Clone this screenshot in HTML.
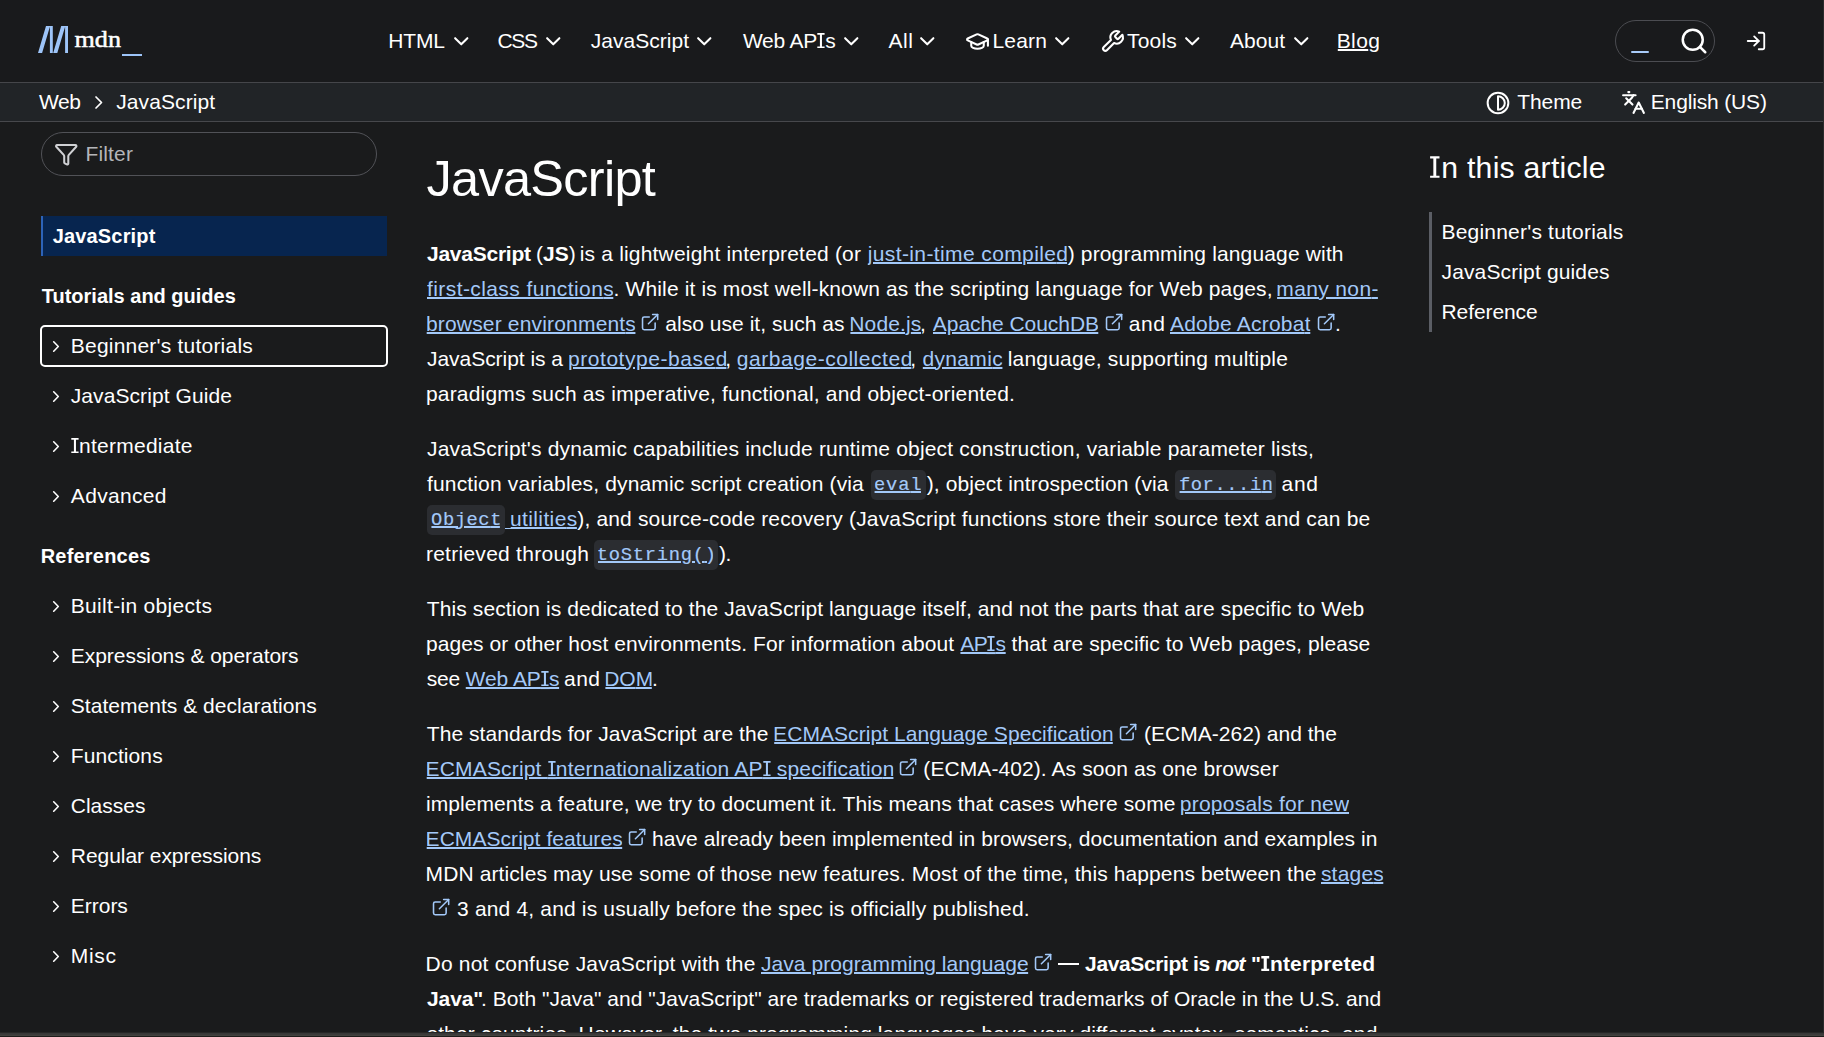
<!DOCTYPE html>
<html lang="en">
<head>
<meta charset="utf-8">
<title>JavaScript | MDN</title>
<style>
*{box-sizing:border-box;margin:0;padding:0}
html,body{width:1824px;height:1037px;overflow:hidden;background:#1a1b1c;color:#fff;
  font-family:"Liberation Sans",sans-serif;}
body{position:relative}
a{color:inherit}
.abs{position:absolute;white-space:nowrap}
svg{display:block;overflow:visible}
.ic{position:absolute;fill:none;stroke:#fff;stroke-width:2;stroke-linecap:round;stroke-linejoin:round}
.box{position:absolute}
#hdr{left:0;top:0;width:1824px;height:82px;background:#191a1c}
#hdrline{left:0;top:82px;width:1824px;height:1px;background:#45464a}
#crumb{left:0;top:83px;width:1824px;height:38px;background:#212427}
#crumbline{left:0;top:121px;width:1824px;height:1px;background:#47484c}
</style>
</head>
<body>
<div class="box" id="hdr"></div><div class="box" id="hdrline"></div><div class="box" id="crumb"></div><div class="box" id="crumbline"></div>
<!-- logo -->
<svg class="box" style="left:38px;top:25.8px;width:30px;height:27px" viewBox="0 0 30 27"><path fill="#9dc4f8" d="M0 27 8 0h4.1L4.1 27ZM11.9 0h2.9v27h-2.9ZM15.2 27l8-27h4.1l-8 27ZM27.1 0H30v27h-2.9Z"/></svg>
<svg class="box" style="left:74px;top:24px;width:50px;height:30px" viewBox="0 0 50 30"><text x="0.5" y="22.5" font-family="Liberation Serif, serif" font-size="22.5" fill="#fff" stroke="#fff" stroke-width="0.45" textLength="46.5" lengthAdjust="spacingAndGlyphs">mdn</text></svg>
<div class="box" style="left:122px;top:53.5px;width:20px;height:2.5px;background:#9dc4f8"></div>

<!-- nav chevrons -->
<svg class="ic" style="left:448.5px;top:29px;width:24.5px;height:24.5px" viewBox="0 0 24 24"><path d="m6 9 6 6 6-6"/></svg>
<svg class="ic" style="left:540.5px;top:29px;width:24.5px;height:24.5px" viewBox="0 0 24 24"><path d="m6 9 6 6 6-6"/></svg>
<svg class="ic" style="left:692px;top:29px;width:24.5px;height:24.5px" viewBox="0 0 24 24"><path d="m6 9 6 6 6-6"/></svg>
<svg class="ic" style="left:838.5px;top:29px;width:24.5px;height:24.5px" viewBox="0 0 24 24"><path d="m6 9 6 6 6-6"/></svg>
<svg class="ic" style="left:914.5px;top:29px;width:24.5px;height:24.5px" viewBox="0 0 24 24"><path d="m6 9 6 6 6-6"/></svg>
<svg class="ic" style="left:1049.5px;top:29px;width:24.5px;height:24.5px" viewBox="0 0 24 24"><path d="m6 9 6 6 6-6"/></svg>
<svg class="ic" style="left:1180px;top:29px;width:24.5px;height:24.5px" viewBox="0 0 24 24"><path d="m6 9 6 6 6-6"/></svg>
<svg class="ic" style="left:1289px;top:29px;width:24.5px;height:24.5px" viewBox="0 0 24 24"><path d="m6 9 6 6 6-6"/></svg>
<!-- learn / tools -->
<svg class="ic" style="left:965px;top:28.6px;width:25px;height:25px" viewBox="0 0 24 24"><path d="M21.42 10.922a1 1 0 0 0-.019-1.838L12.83 5.18a2 2 0 0 0-1.66 0L2.6 9.08a1 1 0 0 0 0 1.832l8.57 3.908a2 2 0 0 0 1.66 0z"/><path d="M22 10v6"/><path d="M6 12.5V16a6 3 0 0 0 12 0v-3.5"/></svg>
<svg class="ic" style="left:1099.5px;top:28.6px;width:25px;height:25px" viewBox="0 0 24 24"><path d="M14.7 6.3a1 1 0 0 0 0 1.4l1.6 1.6a1 1 0 0 0 1.4 0l3.77-3.77a6 6 0 0 1-7.94 7.94l-6.91 6.91a2.12 2.12 0 0 1-3-3l6.91-6.91a6 6 0 0 1 7.94-7.94l-3.76 3.76z"/></svg>
<!-- search -->
<div class="box" style="left:1615px;top:20px;width:100px;height:42px;border:1px solid #4b4c51;border-radius:21px"></div>
<div class="box" style="left:1631px;top:51px;width:18px;height:2px;background:#a9ccf9;border-radius:1px"></div>
<svg class="ic" style="left:1679px;top:26.25px;width:30px;height:30px" viewBox="0 0 24 24"><circle cx="11" cy="11" r="8"/><path d="m21 21-4.3-4.3"/></svg>
<svg class="ic" style="left:1745px;top:30.3px;width:22px;height:22px" viewBox="0 0 24 24"><path d="M15 3h4a2 2 0 0 1 2 2v14a2 2 0 0 1-2 2h-4"/><polyline points="10 17 15 12 10 7"/><line x1="15" x2="3" y1="12" y2="12"/></svg>
<!-- breadcrumb chevron -->
<svg class="ic" style="left:95px;top:96px;width:8px;height:13px;stroke-width:1.7" viewBox="0 0 8 13"><path d="M1 1 6.5 6.5 1 12"/></svg>
<!-- theme icon -->
<svg class="ic" style="left:1486.3px;top:90.5px;width:24px;height:24px" viewBox="0 0 24 24"><circle cx="12" cy="12" r="10.35"/><path d="M12 5.2v13.6M12 5.2a6.8 6.8 0 0 1 0 13.6"/></svg>
<!-- languages icon -->
<svg class="ic" style="left:1620.5px;top:89.5px;width:25px;height:25px" viewBox="0 0 24 24"><path d="m5 8 6 6"/><path d="m4 14 6-6 2-3"/><path d="M2 5h12"/><path d="M7 2h1"/><path d="m22 22-5-10-5 10"/><path d="M14 18h6"/></svg>

<!-- sidebar filter -->
<div class="box" style="left:41px;top:132px;width:336px;height:44px;border:1px solid #515257;border-radius:22px"></div>
<svg class="ic" style="left:53.7px;top:142.3px;width:24.5px;height:24.5px;stroke:#d0d1d4" viewBox="0 0 24 24"><path d="M10 20a1 1 0 0 0 .553.895l2 1A1 1 0 0 0 14 21v-7a2 2 0 0 1 .517-1.341L21.74 4.67A1 1 0 0 0 21 3H3a1 1 0 0 0-.742 1.67l7.225 7.989A2 2 0 0 1 10 14z"/></svg>
<!-- sidebar active -->
<div class="box" style="left:41px;top:216px;width:346px;height:40px;background:#07254f;border-left:2px solid #2d63b8"></div>
<!-- focus ring -->
<div class="box" style="left:40px;top:325px;width:348px;height:42px;border:2px solid #fff;border-radius:5px"></div>
<svg class="ic" style="left:52px;top:339.7px;width:8px;height:13px;stroke-width:1.6" viewBox="0 0 8 13"><path d="M1.7 1.8 6.3 6.5 1.7 11.2"/></svg>
<svg class="ic" style="left:52px;top:389.7px;width:8px;height:13px;stroke-width:1.6" viewBox="0 0 8 13"><path d="M1.7 1.8 6.3 6.5 1.7 11.2"/></svg>
<svg class="ic" style="left:52px;top:439.7px;width:8px;height:13px;stroke-width:1.6" viewBox="0 0 8 13"><path d="M1.7 1.8 6.3 6.5 1.7 11.2"/></svg>
<svg class="ic" style="left:52px;top:489.7px;width:8px;height:13px;stroke-width:1.6" viewBox="0 0 8 13"><path d="M1.7 1.8 6.3 6.5 1.7 11.2"/></svg>
<svg class="ic" style="left:52px;top:599.7px;width:8px;height:13px;stroke-width:1.6" viewBox="0 0 8 13"><path d="M1.7 1.8 6.3 6.5 1.7 11.2"/></svg>
<svg class="ic" style="left:52px;top:649.7px;width:8px;height:13px;stroke-width:1.6" viewBox="0 0 8 13"><path d="M1.7 1.8 6.3 6.5 1.7 11.2"/></svg>
<svg class="ic" style="left:52px;top:699.7px;width:8px;height:13px;stroke-width:1.6" viewBox="0 0 8 13"><path d="M1.7 1.8 6.3 6.5 1.7 11.2"/></svg>
<svg class="ic" style="left:52px;top:749.7px;width:8px;height:13px;stroke-width:1.6" viewBox="0 0 8 13"><path d="M1.7 1.8 6.3 6.5 1.7 11.2"/></svg>
<svg class="ic" style="left:52px;top:799.7px;width:8px;height:13px;stroke-width:1.6" viewBox="0 0 8 13"><path d="M1.7 1.8 6.3 6.5 1.7 11.2"/></svg>
<svg class="ic" style="left:52px;top:849.7px;width:8px;height:13px;stroke-width:1.6" viewBox="0 0 8 13"><path d="M1.7 1.8 6.3 6.5 1.7 11.2"/></svg>
<svg class="ic" style="left:52px;top:899.7px;width:8px;height:13px;stroke-width:1.6" viewBox="0 0 8 13"><path d="M1.7 1.8 6.3 6.5 1.7 11.2"/></svg>
<svg class="ic" style="left:52px;top:949.7px;width:8px;height:13px;stroke-width:1.6" viewBox="0 0 8 13"><path d="M1.7 1.8 6.3 6.5 1.7 11.2"/></svg>
<!-- toc rule -->
<div class="box" style="left:1429px;top:212px;width:3px;height:120px;background:#5b5e65"></div>

<svg class="box" style="left:1429px;top:155px;width:12px;height:24px" viewBox="0 0 12 24"><path fill="#fff" d="M1.1 1.3h9.4v2.1H7.25v17.3h3.25v2.1H1.1v-2.1h3.25V3.4H1.1z"/></svg>
<svg class="ic" style="left:639.8px;top:311.7px;width:20.2px;height:20.2px;stroke:#a3c9f9;stroke-width:1.85" viewBox="0 0 24 24"><path d="M18 13v6a2 2 0 0 1-2 2H5a2 2 0 0 1-2-2V8a2 2 0 0 1 2-2h6"/><path d="M15 3h6v6"/><path d="M10 14 21 3"/></svg>
<svg class="ic" style="left:1104.4px;top:311.7px;width:20.2px;height:20.2px;stroke:#a3c9f9;stroke-width:1.85" viewBox="0 0 24 24"><path d="M18 13v6a2 2 0 0 1-2 2H5a2 2 0 0 1-2-2V8a2 2 0 0 1 2-2h6"/><path d="M15 3h6v6"/><path d="M10 14 21 3"/></svg>
<svg class="ic" style="left:1315.5px;top:311.7px;width:20.2px;height:20.2px;stroke:#a3c9f9;stroke-width:1.85" viewBox="0 0 24 24"><path d="M18 13v6a2 2 0 0 1-2 2H5a2 2 0 0 1-2-2V8a2 2 0 0 1 2-2h6"/><path d="M15 3h6v6"/><path d="M10 14 21 3"/></svg>
<div class="box" style="left:870.5px;top:470px;width:55.5px;height:30px;background:#2b2d31;border-radius:5px"></div>
<div class="box" style="left:1175.0px;top:470px;width:100.5px;height:30px;background:#2b2d31;border-radius:5px"></div>
<div class="box" style="left:427.4px;top:505px;width:77.3px;height:30px;background:#2b2d31;border-radius:5px"></div>
<div class="box" style="left:594.2px;top:540px;width:123.4px;height:30px;background:#2b2d31;border-radius:5px"></div>
<svg class="ic" style="left:1118.0px;top:721.7px;width:20.2px;height:20.2px;stroke:#a3c9f9;stroke-width:1.85" viewBox="0 0 24 24"><path d="M18 13v6a2 2 0 0 1-2 2H5a2 2 0 0 1-2-2V8a2 2 0 0 1 2-2h6"/><path d="M15 3h6v6"/><path d="M10 14 21 3"/></svg>
<svg class="ic" style="left:897.9px;top:756.7px;width:20.2px;height:20.2px;stroke:#a3c9f9;stroke-width:1.85" viewBox="0 0 24 24"><path d="M18 13v6a2 2 0 0 1-2 2H5a2 2 0 0 1-2-2V8a2 2 0 0 1 2-2h6"/><path d="M15 3h6v6"/><path d="M10 14 21 3"/></svg>
<svg class="ic" style="left:626.8px;top:826.7px;width:20.2px;height:20.2px;stroke:#a3c9f9;stroke-width:1.85" viewBox="0 0 24 24"><path d="M18 13v6a2 2 0 0 1-2 2H5a2 2 0 0 1-2-2V8a2 2 0 0 1 2-2h6"/><path d="M15 3h6v6"/><path d="M10 14 21 3"/></svg>
<svg class="ic" style="left:431.3px;top:896.7px;width:20.2px;height:20.2px;stroke:#a3c9f9;stroke-width:1.85" viewBox="0 0 24 24"><path d="M18 13v6a2 2 0 0 1-2 2H5a2 2 0 0 1-2-2V8a2 2 0 0 1 2-2h6"/><path d="M15 3h6v6"/><path d="M10 14 21 3"/></svg>
<svg class="ic" style="left:1032.7px;top:951.7px;width:20.2px;height:20.2px;stroke:#a3c9f9;stroke-width:1.85" viewBox="0 0 24 24"><path d="M18 13v6a2 2 0 0 1-2 2H5a2 2 0 0 1-2-2V8a2 2 0 0 1 2-2h6"/><path d="M15 3h6v6"/><path d="M10 14 21 3"/></svg>
<div class="box" style="left:1058.3px;top:963.3px;width:20.8px;height:1.7px;background:#fff"></div>
<div class="box" style="left:505px;top:527.5px;width:7px;height:1.5px;background:#a3c9f9"></div>
<span class="abs" style="left:388.28px;top:29.12px;font-size:21px;line-height:24px;letter-spacing:-0.151px;">HTML</span>
<span class="abs" style="left:497.53px;top:29.12px;font-size:21px;line-height:24px;letter-spacing:-1.379px;">CSS</span>
<span class="abs" style="left:590.67px;top:29.12px;font-size:21px;line-height:24px;letter-spacing:0.048px;">JavaScript</span>
<span class="abs" style="left:742.91px;top:29.12px;font-size:21px;line-height:24px;letter-spacing:-0.223px;">Web AP<svg style="display:inline-block;width:8.20px;height:15.10px;vertical-align:baseline" viewBox="0 0 8.20 15.10"><path fill="currentColor" d="M0.30 0H7.60V1.65H4.97V13.45H7.60V15.10H0.30V13.45H2.92V1.65H0.30Z"/></svg>s</span>
<span class="abs" style="left:888.46px;top:29.12px;font-size:21px;line-height:24px;letter-spacing:0.551px;">All</span>
<span class="abs" style="left:992.48px;top:29.12px;font-size:21px;line-height:24px;letter-spacing:0.192px;">Learn</span>
<span class="abs" style="left:1127.03px;top:29.12px;font-size:21px;line-height:24px;letter-spacing:0.175px;">Tools</span>
<span class="abs" style="left:1229.96px;top:29.12px;font-size:21px;line-height:24px;letter-spacing:0.076px;">About</span>
<span class="abs" style="left:1336.68px;top:29.12px;font-size:21px;line-height:24px;letter-spacing:0.410px;text-decoration:underline;text-decoration-thickness:1.5px;text-underline-offset:1.2px;clip-path:inset(-8px 0.95px -8px 1.12px);">Blo<span style="letter-spacing:0">g</span></span>
<span class="abs" style="left:38.91px;top:89.72px;font-size:21px;line-height:24px;letter-spacing:-0.419px;">Web</span>
<span class="abs" style="left:116.17px;top:89.72px;font-size:21px;line-height:24px;letter-spacing:0.104px;">JavaScript</span>
<span class="abs" style="left:1517.33px;top:89.72px;font-size:21px;line-height:24px;letter-spacing:-0.114px;">Theme</span>
<span class="abs" style="left:1650.78px;top:89.72px;font-size:21px;line-height:24px;letter-spacing:-0.159px;">English (US)</span>
<span class="abs" style="left:85.48px;top:142.22px;font-size:21px;line-height:24px;letter-spacing:0.160px;color:#b4b5b8;">Filter</span>
<span class="abs" style="left:52.70px;top:224.27px;font-size:20px;line-height:24px;letter-spacing:0.164px;font-weight:bold;">JavaScript</span>
<span class="abs" style="left:41.78px;top:284.07px;font-size:20px;line-height:24px;letter-spacing:-0.003px;font-weight:bold;">Tutorials and guides</span>
<span class="abs" style="left:70.80px;top:333.72px;font-size:21px;line-height:24px;letter-spacing:0.212px;">Beginner's tutorials</span>
<span class="abs" style="left:70.80px;top:383.72px;font-size:21px;line-height:24px;letter-spacing:0.074px;">JavaScript Guide</span>
<span class="abs" style="left:70.80px;top:433.72px;font-size:21px;line-height:24px;letter-spacing:0.264px;"><svg style="display:inline-block;width:8.20px;height:15.10px;vertical-align:baseline" viewBox="0 0 8.20 15.10"><path fill="currentColor" d="M0.30 0H7.60V1.65H4.97V13.45H7.60V15.10H0.30V13.45H2.92V1.65H0.30Z"/></svg>ntermediate</span>
<span class="abs" style="left:70.80px;top:483.72px;font-size:21px;line-height:24px;letter-spacing:0.335px;">Advanced</span>
<span class="abs" style="left:40.66px;top:544.07px;font-size:20px;line-height:24px;letter-spacing:0.213px;font-weight:bold;">References</span>
<span class="abs" style="left:70.80px;top:593.72px;font-size:21px;line-height:24px;letter-spacing:0.306px;">Built-in objects</span>
<span class="abs" style="left:70.80px;top:643.72px;font-size:21px;line-height:24px;letter-spacing:-0.046px;">Expressions &amp; operators</span>
<span class="abs" style="left:70.80px;top:693.72px;font-size:21px;line-height:24px;letter-spacing:0.030px;">Statements &amp; declarations</span>
<span class="abs" style="left:70.80px;top:743.72px;font-size:21px;line-height:24px;letter-spacing:0.101px;">Functions</span>
<span class="abs" style="left:70.80px;top:793.72px;font-size:21px;line-height:24px;letter-spacing:-0.007px;">Classes</span>
<span class="abs" style="left:70.80px;top:843.72px;font-size:21px;line-height:24px;letter-spacing:-0.049px;">Regular expressions</span>
<span class="abs" style="left:70.80px;top:893.72px;font-size:21px;line-height:24px;letter-spacing:-0.023px;">Errors</span>
<span class="abs" style="left:70.80px;top:943.72px;font-size:21px;line-height:24px;letter-spacing:0.661px;">Misc</span>
<span class="abs" style="left:1441.29px;top:147.54px;font-size:30.2px;line-height:40px;letter-spacing:0.251px;">n this article</span>
<span class="abs" style="left:1441.50px;top:219.72px;font-size:21px;line-height:24px;letter-spacing:0.201px;">Beginner's tutorials</span>
<span class="abs" style="left:1441.50px;top:259.72px;font-size:21px;line-height:24px;letter-spacing:0.137px;">JavaScript guides</span>
<span class="abs" style="left:1441.50px;top:299.72px;font-size:21px;line-height:24px;letter-spacing:-0.095px;">Reference</span>
<span class="abs" style="left:426.51px;top:149.00px;font-size:50.5px;line-height:60px;letter-spacing:-0.712px;">JavaScript</span>
<span class="abs" style="left:426.98px;top:241.72px;font-size:21px;line-height:24px;letter-spacing:-0.240px;font-weight:bold;">JavaScript</span>
<span class="abs" style="left:535.90px;top:241.72px;font-size:21px;line-height:24px;letter-spacing:0.039px;">(<b>JS</b>)</span>
<span class="abs" style="left:579.70px;top:241.72px;font-size:21px;line-height:24px;letter-spacing:0.186px;">is a lightweight interpreted (or</span>
<span class="abs" style="left:867.71px;top:241.72px;font-size:21px;line-height:24px;letter-spacing:0.388px;color:#a3c9f9;text-decoration:underline;text-decoration-thickness:1.5px;text-underline-offset:1.2px;clip-path:inset(-8px 0.95px -8px 0.00px);">just-in-time compile<span style="letter-spacing:0">d</span></span>
<span class="abs" style="left:1067.68px;top:241.72px;font-size:21px;line-height:24px;letter-spacing:0.150px;">) programming language with</span>
<span class="abs" style="left:427.00px;top:276.72px;font-size:21px;line-height:24px;letter-spacing:0.410px;color:#a3c9f9;text-decoration:underline;text-decoration-thickness:1.5px;text-underline-offset:1.2px;clip-path:inset(-8px 0.36px -8px 0.00px);">first-class function<span style="letter-spacing:0">s</span></span>
<span class="abs" style="left:613.58px;top:276.72px;font-size:21px;line-height:24px;letter-spacing:0.133px;">. While it is most well-known as the scripting language for Web pages,</span>
<span class="abs" style="left:1276.31px;top:276.72px;font-size:21px;line-height:24px;letter-spacing:0.362px;color:#a3c9f9;text-decoration:underline;text-decoration-thickness:1.5px;text-underline-offset:1.2px;clip-path:inset(-8px 0.53px -8px 0.79px);">many non<span style="letter-spacing:0">-</span></span>
<span class="abs" style="left:425.95px;top:311.72px;font-size:21px;line-height:24px;letter-spacing:0.175px;color:#a3c9f9;text-decoration:underline;text-decoration-thickness:1.5px;text-underline-offset:1.2px;clip-path:inset(-8px 0.36px -8px 0.75px);">browser environment<span style="letter-spacing:0">s</span></span>
<span class="abs" style="left:665.31px;top:311.72px;font-size:21px;line-height:24px;letter-spacing:0.035px;">also use it, such as</span>
<span class="abs" style="left:849.28px;top:311.72px;font-size:21px;line-height:24px;letter-spacing:0.146px;color:#a3c9f9;text-decoration:underline;text-decoration-thickness:1.5px;text-underline-offset:1.2px;clip-path:inset(-8px 0.36px -8px 1.12px);">Node.j<span style="letter-spacing:0">s</span></span>
<span class="abs" style="left:919.91px;top:311.72px;font-size:21px;line-height:24px;letter-spacing:0.000px;">,</span>
<span class="abs" style="left:932.86px;top:311.72px;font-size:21px;line-height:24px;letter-spacing:-0.062px;color:#a3c9f9;text-decoration:underline;text-decoration-thickness:1.5px;text-underline-offset:1.2px;clip-path:inset(-8px 0.71px -8px 0.00px);">Apache CouchD<span style="letter-spacing:0">B</span></span>
<span class="abs" style="left:1128.81px;top:311.72px;font-size:21px;line-height:24px;letter-spacing:0.599px;">and</span>
<span class="abs" style="left:1169.96px;top:311.72px;font-size:21px;line-height:24px;letter-spacing:0.234px;color:#a3c9f9;text-decoration:underline;text-decoration-thickness:1.5px;text-underline-offset:1.2px;clip-path:inset(-8px 0.00px -8px 0.00px);">Adobe Acroba<span style="letter-spacing:0">t</span></span>
<span class="abs" style="left:1335.08px;top:311.72px;font-size:21px;line-height:24px;letter-spacing:0.000px;">.</span>
<span class="abs" style="left:426.97px;top:346.72px;font-size:21px;line-height:24px;letter-spacing:-0.038px;">JavaScript is a</span>
<span class="abs" style="left:568.05px;top:346.72px;font-size:21px;line-height:24px;letter-spacing:0.538px;color:#a3c9f9;text-decoration:underline;text-decoration-thickness:1.5px;text-underline-offset:1.2px;clip-path:inset(-8px 0.95px -8px 0.75px);">prototype-base<span style="letter-spacing:0">d</span></span>
<span class="abs" style="left:725.31px;top:346.72px;font-size:21px;line-height:24px;letter-spacing:0.000px;">,</span>
<span class="abs" style="left:736.82px;top:346.72px;font-size:21px;line-height:24px;letter-spacing:0.536px;color:#a3c9f9;text-decoration:underline;text-decoration-thickness:1.5px;text-underline-offset:1.2px;clip-path:inset(-8px 0.95px -8px 0.28px);">garbage-collecte<span style="letter-spacing:0">d</span></span>
<span class="abs" style="left:910.31px;top:346.72px;font-size:21px;line-height:24px;letter-spacing:0.000px;">,</span>
<span class="abs" style="left:922.42px;top:346.72px;font-size:21px;line-height:24px;letter-spacing:0.355px;color:#a3c9f9;text-decoration:underline;text-decoration-thickness:1.5px;text-underline-offset:1.2px;clip-path:inset(-8px 0.15px -8px 0.28px);">dynami<span style="letter-spacing:0">c</span></span>
<span class="abs" style="left:1007.68px;top:346.72px;font-size:21px;line-height:24px;letter-spacing:0.210px;">language, supporting multiple</span>
<span class="abs" style="left:425.95px;top:381.72px;font-size:21px;line-height:24px;letter-spacing:0.183px;">paradigms such as imperative, functional, and object-oriented.</span>
<span class="abs" style="left:426.97px;top:436.72px;font-size:21px;line-height:24px;letter-spacing:0.177px;">JavaScript's dynamic capabilities include runtime object construction, variable parameter lists,</span>
<span class="abs" style="left:427.00px;top:471.72px;font-size:21px;line-height:24px;letter-spacing:0.155px;">function variables, dynamic script creation (via</span>
<span class="abs" style="left:873.98px;top:472.50px;font-size:18.75px;line-height:24px;letter-spacing:0.874px;font-family:'Liberation Mono',monospace;color:#a3c9f9;text-decoration:underline;text-decoration-thickness:1.5px;text-underline-offset:1.2px;-webkit-text-stroke:0.18px #a3c9f9;clip-path:inset(-8px 0.63px -8px 0.62px);">eva<span style="letter-spacing:0">l</span></span>
<span class="abs" style="left:926.78px;top:471.72px;font-size:21px;line-height:24px;letter-spacing:0.090px;">), object introspection (via</span>
<span class="abs" style="left:1178.94px;top:472.50px;font-size:18.75px;line-height:24px;letter-spacing:0.583px;font-family:'Liberation Mono',monospace;color:#a3c9f9;text-decoration:underline;text-decoration-thickness:1.5px;text-underline-offset:1.2px;-webkit-text-stroke:0.18px #a3c9f9;clip-path:inset(-8px 1.25px -8px 0.66px);">for...i<span style="letter-spacing:0">n</span></span>
<span class="abs" style="left:1281.51px;top:471.72px;font-size:21px;line-height:24px;letter-spacing:0.749px;">and</span>
<span class="abs" style="left:431.07px;top:507.50px;font-size:18.75px;line-height:24px;letter-spacing:0.569px;font-family:'Liberation Mono',monospace;color:#a3c9f9;text-decoration:underline;text-decoration-thickness:1.5px;text-underline-offset:1.2px;-webkit-text-stroke:0.18px #a3c9f9;clip-path:inset(-8px 1.54px -8px 0.33px);">Objec<span style="letter-spacing:0">t</span></span>
<span class="abs" style="left:509.94px;top:506.72px;font-size:21px;line-height:24px;letter-spacing:0.390px;color:#a3c9f9;text-decoration:underline;text-decoration-thickness:1.5px;text-underline-offset:1.2px;clip-path:inset(-8px 0.36px -8px 0.76px);">utilitie<span style="letter-spacing:0">s</span></span>
<span class="abs" style="left:577.28px;top:506.72px;font-size:21px;line-height:24px;letter-spacing:0.159px;">), and source-code recovery (JavaScript functions store their source text and can be</span>
<span class="abs" style="left:425.91px;top:541.72px;font-size:21px;line-height:24px;letter-spacing:0.268px;">retrieved through</span>
<span class="abs" style="left:596.86px;top:542.50px;font-size:18.75px;line-height:24px;letter-spacing:0.738px;font-family:'Liberation Mono',monospace;color:#a3c9f9;text-decoration:underline;text-decoration-thickness:1.5px;text-underline-offset:1.2px;-webkit-text-stroke:0.18px #a3c9f9;clip-path:inset(-8px 2.75px -8px 1.14px);">toString(<span style="letter-spacing:0">)</span></span>
<span class="abs" style="left:719.08px;top:541.72px;font-size:21px;line-height:24px;letter-spacing:-0.588px;">).</span>
<span class="abs" style="left:426.83px;top:596.72px;font-size:21px;line-height:24px;letter-spacing:0.095px;">This section is dedicated to the JavaScript language itself, and not the parts that are specific to Web</span>
<span class="abs" style="left:425.95px;top:631.72px;font-size:21px;line-height:24px;letter-spacing:0.076px;">pages or other host environments. For information about</span>
<span class="abs" style="left:960.26px;top:631.72px;font-size:21px;line-height:24px;letter-spacing:-0.452px;color:#a3c9f9;text-decoration:underline;text-decoration-thickness:1.5px;text-underline-offset:1.2px;clip-path:inset(-8px 0.36px -8px 0.00px);">AP<svg style="display:inline-block;width:8.20px;height:15.10px;vertical-align:baseline" viewBox="0 0 8.20 15.10"><path fill="currentColor" d="M0.30 0H7.60V1.65H4.97V13.45H7.60V15.10H0.30V13.45H2.92V1.65H0.30Z"/><rect x="-0.6" y="16.10" width="9.40" height="2" fill="#a3c9f9"/></svg><span style="letter-spacing:0">s</span></span>
<span class="abs" style="left:1011.48px;top:631.72px;font-size:21px;line-height:24px;letter-spacing:0.083px;">that are specific to Web pages, please</span>
<span class="abs" style="left:426.72px;top:666.72px;font-size:21px;line-height:24px;letter-spacing:-0.171px;">see</span>
<span class="abs" style="left:465.51px;top:666.72px;font-size:21px;line-height:24px;letter-spacing:-0.023px;color:#a3c9f9;text-decoration:underline;text-decoration-thickness:1.5px;text-underline-offset:1.2px;clip-path:inset(-8px 0.36px -8px 0.00px);">Web AP<svg style="display:inline-block;width:8.20px;height:15.10px;vertical-align:baseline" viewBox="0 0 8.20 15.10"><path fill="currentColor" d="M0.30 0H7.60V1.65H4.97V13.45H7.60V15.10H0.30V13.45H2.92V1.65H0.30Z"/><rect x="-0.6" y="16.10" width="9.40" height="2" fill="#a3c9f9"/></svg><span style="letter-spacing:0">s</span></span>
<span class="abs" style="left:564.01px;top:666.72px;font-size:21px;line-height:24px;letter-spacing:0.449px;">and</span>
<span class="abs" style="left:604.28px;top:666.72px;font-size:21px;line-height:24px;letter-spacing:-0.077px;color:#a3c9f9;text-decoration:underline;text-decoration-thickness:1.5px;text-underline-offset:1.2px;clip-path:inset(-8px 1.32px -8px 1.12px);">DO<span style="letter-spacing:0">M</span></span>
<span class="abs" style="left:651.88px;top:666.72px;font-size:21px;line-height:24px;letter-spacing:0.000px;">.</span>
<span class="abs" style="left:426.83px;top:721.72px;font-size:21px;line-height:24px;letter-spacing:0.052px;">The standards for JavaScript are the</span>
<span class="abs" style="left:773.08px;top:721.72px;font-size:21px;line-height:24px;letter-spacing:0.067px;color:#a3c9f9;text-decoration:underline;text-decoration-thickness:1.5px;text-underline-offset:1.2px;clip-path:inset(-8px 0.96px -8px 1.12px);">ECMAScript Language Specificatio<span style="letter-spacing:0">n</span></span>
<span class="abs" style="left:1144.00px;top:721.72px;font-size:21px;line-height:24px;letter-spacing:0.020px;">(ECMA-262) and the</span>
<span class="abs" style="left:425.58px;top:756.72px;font-size:21px;line-height:24px;letter-spacing:0.167px;color:#a3c9f9;text-decoration:underline;text-decoration-thickness:1.5px;text-underline-offset:1.2px;clip-path:inset(-8px 0.96px -8px 1.12px);">ECMAScript <svg style="display:inline-block;width:8.20px;height:15.10px;vertical-align:baseline" viewBox="0 0 8.20 15.10"><path fill="currentColor" d="M0.30 0H7.60V1.65H4.97V13.45H7.60V15.10H0.30V13.45H2.92V1.65H0.30Z"/><rect x="-0.6" y="16.10" width="9.40" height="2" fill="#a3c9f9"/></svg>nternationalization AP<svg style="display:inline-block;width:8.20px;height:15.10px;vertical-align:baseline" viewBox="0 0 8.20 15.10"><path fill="currentColor" d="M0.30 0H7.60V1.65H4.97V13.45H7.60V15.10H0.30V13.45H2.92V1.65H0.30Z"/><rect x="-0.6" y="16.10" width="9.40" height="2" fill="#a3c9f9"/></svg> specificatio<span style="letter-spacing:0">n</span></span>
<span class="abs" style="left:923.30px;top:756.72px;font-size:21px;line-height:24px;letter-spacing:0.086px;">(ECMA-402). As soon as one browser</span>
<span class="abs" style="left:425.90px;top:791.72px;font-size:21px;line-height:24px;letter-spacing:0.084px;">implements a feature, we try to document it. This means that cases where some</span>
<span class="abs" style="left:1179.85px;top:791.72px;font-size:21px;line-height:24px;letter-spacing:0.221px;color:#a3c9f9;text-decoration:underline;text-decoration-thickness:1.5px;text-underline-offset:1.2px;clip-path:inset(-8px 0.00px -8px 0.75px);">proposals for ne<span style="letter-spacing:0">w</span></span>
<span class="abs" style="left:425.58px;top:826.72px;font-size:21px;line-height:24px;letter-spacing:0.056px;color:#a3c9f9;text-decoration:underline;text-decoration-thickness:1.5px;text-underline-offset:1.2px;clip-path:inset(-8px 0.36px -8px 1.12px);">ECMAScript feature<span style="letter-spacing:0">s</span></span>
<span class="abs" style="left:651.94px;top:826.72px;font-size:21px;line-height:24px;letter-spacing:0.073px;">have already been implemented in browsers, documentation and examples in</span>
<span class="abs" style="left:425.58px;top:861.72px;font-size:21px;line-height:24px;letter-spacing:0.107px;">MDN articles may use some of those new features. Most of the time, this happens between the</span>
<span class="abs" style="left:1320.92px;top:861.72px;font-size:21px;line-height:24px;letter-spacing:0.194px;color:#a3c9f9;text-decoration:underline;text-decoration-thickness:1.5px;text-underline-offset:1.2px;clip-path:inset(-8px 0.36px -8px 0.00px);">stage<span style="letter-spacing:0">s</span></span>
<span class="abs" style="left:457.10px;top:896.72px;font-size:21px;line-height:24px;letter-spacing:0.162px;">3 and 4, and is usually before the spec is officially published.</span>
<span class="abs" style="left:425.58px;top:951.72px;font-size:21px;line-height:24px;letter-spacing:0.197px;">Do not confuse JavaScript with the</span>
<span class="abs" style="left:760.97px;top:951.72px;font-size:21px;line-height:24px;letter-spacing:0.066px;color:#a3c9f9;text-decoration:underline;text-decoration-thickness:1.5px;text-underline-offset:1.2px;clip-path:inset(-8px 0.53px -8px 0.00px);">Java programming languag<span style="letter-spacing:0">e</span></span>
<span class="abs" style="left:1085.08px;top:951.72px;font-size:21px;line-height:24px;letter-spacing:-0.376px;font-weight:bold;">JavaScript is</span>
<span class="abs" style="left:1214.94px;top:951.72px;font-size:21px;line-height:24px;letter-spacing:-1.058px;font-weight:bold;font-style:italic;">not</span>
<span class="abs" style="left:1251.12px;top:951.72px;font-size:21px;line-height:24px;letter-spacing:0.144px;font-weight:bold;">"<svg style="display:inline-block;width:8.80px;height:15.10px;vertical-align:baseline" viewBox="0 0 8.80 15.10"><path fill="currentColor" d="M0.30 0H8.20V2.40H5.80V12.70H8.20V15.10H0.30V12.70H2.70V2.40H0.30Z"/></svg>nterpreted</span>
<span class="abs" style="left:426.98px;top:986.72px;font-size:21px;line-height:24px;letter-spacing:-0.096px;font-weight:bold;">Java"</span>
<span class="abs" style="left:481.08px;top:986.72px;font-size:21px;line-height:24px;letter-spacing:0.032px;">. Both "Java" and "JavaScript" are trademarks or registered trademarks of Oracle in the U.S. and</span>
<span class="abs" style="left:426.42px;top:1021.72px;font-size:21px;line-height:24px;letter-spacing:0.096px;">other countries. However, the two programming languages have very different syntax, semantics, and</span>
<div class="box" style="left:0;top:1032px;width:1824px;height:1px;background:#262626"></div>
<div class="box" style="left:0;top:1033px;width:1824px;height:1px;background:#383838"></div>
<div class="box" style="left:0;top:1034px;width:1824px;height:1px;background:#3c3b3a"></div>
<div class="box" style="left:0;top:1035px;width:1824px;height:1px;background:#43423f"></div>
<div class="box" style="left:0;top:1036px;width:1824px;height:1px;background:#1e1d1b"></div>
<div class="box" style="left:1823px;top:0;width:1px;height:1032px;background:#2a2b2c"></div>
</body>
</html>
